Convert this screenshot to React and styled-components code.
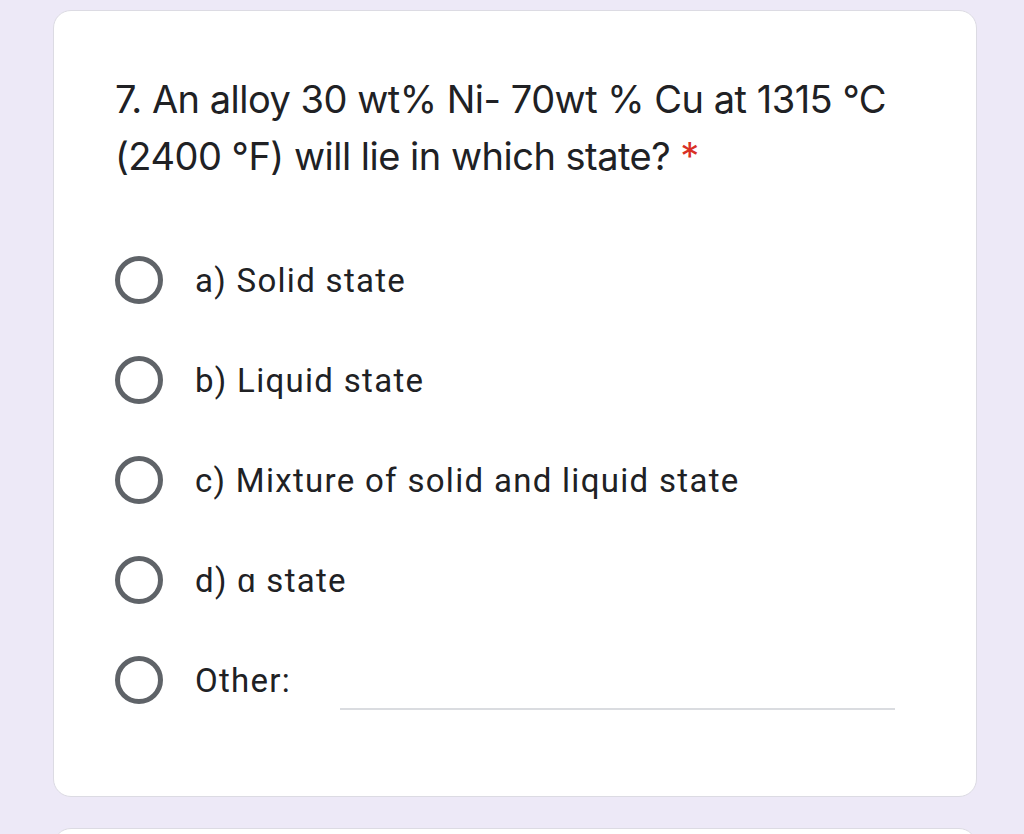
import React from "react";
import styled, { createGlobalStyle } from "styled-components";

const Global = createGlobalStyle`
  html, body { margin: 0; padding: 0; }
  body { background: #ede9f7; font-family: Roboto, "Liberation Sans", sans-serif; }
`;

const Page = styled.div`
  width: 1024px;
  height: 834px;
  overflow: hidden;
  box-sizing: border-box;
  padding: 10px 47px 0 53px;
  display: flex;
  flex-direction: column;
  gap: 31px;
`;

const Card = styled.div`
  background: #fff;
  border: 1.5px solid #dcdbe3;
  border-radius: 18px;
  box-sizing: border-box;
  height: ${(p) => p.$h}px;
  flex-shrink: 0;
  padding: 60px 81px 0 61px;
`;

const Title = styled.div`
  font-family: Inter, "Open Sans", sans-serif;
  font-size: 38px;
  line-height: 57px;
  color: #202124;
  letter-spacing: -0.5px;
  margin-right: -19px;
  margin-bottom: 45px;
`;

const Star = styled.span`
  color: #d93025;
  margin-left: 10px;
`;

const Options = styled.div`
  display: flex;
  flex-direction: column;
`;

const Option = styled.label`
  display: flex;
  align-items: center;
  height: 100px;
  gap: 32px;
  font-size: 33px;
  letter-spacing: 1.3px;
  color: #202124;
`;

const Radio = styled.span`
  width: 48px;
  height: 48px;
  box-sizing: border-box;
  border: 5px solid #5f6368;
  border-radius: 50%;
  flex-shrink: 0;
`;

const OtherLine = styled.span`
  flex: 1;
  align-self: flex-end;
  margin: 0 0 20px 17px;
  border-bottom: 2px solid #dadce0;
`;

const opts = [
  "a) Solid state",
  "b) Liquid state",
  "c) Mixture of solid and liquid state",
  "d) \u0251 state",
];

export default function App() {
  return (
    <>
      <Global />
      <Page>
        <Card $h={787}>
          <Title>
            7. An alloy 30 wt% Ni- 70wt % Cu at 1315 °C (2400 °F) will lie in
            which state?<Star>*</Star>
          </Title>
          <Options>
            {opts.map((o) => (
              <Option key={o}>
                <Radio />
                {o}
              </Option>
            ))}
            <Option>
              <Radio />
              Other:
              <OtherLine />
            </Option>
          </Options>
        </Card>
        <Card $h={100} />
      </Page>
    </>
  );
}
